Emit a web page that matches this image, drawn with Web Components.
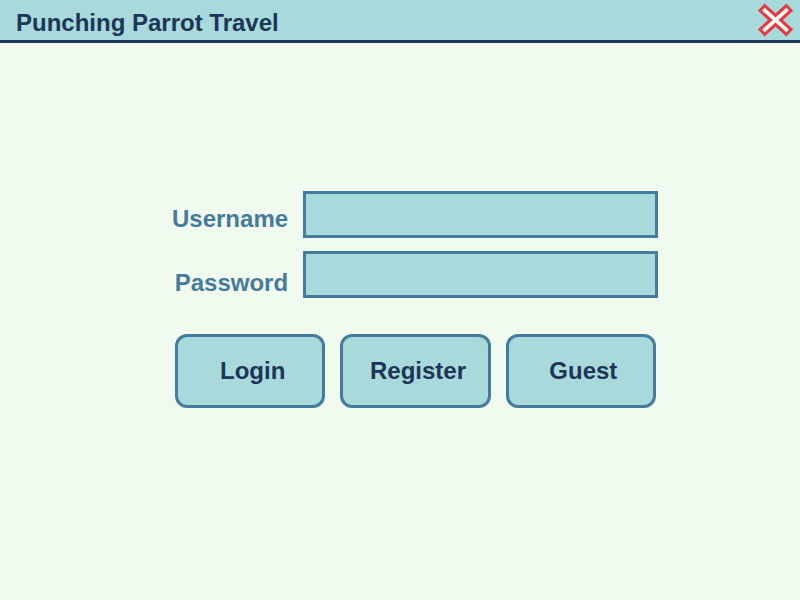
<!DOCTYPE html>
<html lang="en">
<head>
<meta charset="utf-8">
<title>Punching Parrot Travel</title>
<style>
  :root {
    --cream: #f1faee;
    --aqua: #a8dadc;
    --steel: #457b9d;
    --navy: #1d3557;
    --red: #e63946;
  }
  body {
    margin: 0;
    background: var(--cream);
    color: var(--navy);
    font: bold 24px/28px "Liberation Sans", Arial, sans-serif;
  }
</style>
</head>
<body>
<travel-app>
  <title-bar slot="header">Punching Parrot Travel</title-bar>
  <login-form>
    <action-button slot="actions">Login</action-button>
    <action-button slot="actions">Register</action-button>
    <action-button slot="actions">Guest</action-button>
  </login-form>
</travel-app>
<script>
  function define(name, html) {
    customElements.define(name, class extends HTMLElement {
      constructor() {
        super();
        this.attachShadow({ mode: "open" }).innerHTML = html;
      }
    });
  }

  define("travel-app", `
    <style>
      :host { display: flex; flex-direction: column; min-height: 100vh; }
      main {
        flex: 1;
        display: flex;
        align-items: center;
        justify-content: center;
        padding: 0 0 44px 30px;
      }
    </style>
    <slot name="header"></slot>
    <main><slot></slot></main>`);

  define("title-bar", `
    <style>
      :host { display: block; }
      header {
        display: flex;
        align-items: center;
        justify-content: space-between;
        padding: 2px 7px 2px 16px;
        background: var(--aqua);
        border-bottom: 3px solid var(--navy);
      }
      h1 { margin: 0; padding-top: 6px; font: inherit; }
      button { display: flex; padding: 2px 0; border: 0; background: none; cursor: pointer; }
    </style>
    <header>
      <h1><slot></slot></h1>
      <button type="button" aria-label="Close">
        <svg width="35" height="32" viewBox="0 0 35 32" fill="none" overflow="visible" aria-hidden="true">
          <path d="M3.2 3.1 31.8 28.9M31.8 3.1 3.2 28.9" stroke="var(--red)" stroke-width="10"/>
          <path d="M5.4 5.1 29.6 26.9M29.6 5.1 5.4 26.9" stroke="var(--cream)" stroke-width="3.8"/>
        </svg>
      </button>
    </header>`);

  define("login-form", `
    <style>
      :host { display: block; flex: 0 1 486px; min-width: 0; }
      form { display: flex; flex-direction: column; gap: 36px; }
      .fields { display: flex; gap: 15px; }
      .labels {
        flex: 1;
        display: flex;
        flex-direction: column;
        align-items: flex-end;
        gap: 36px;
        padding-top: 14px;
        color: var(--steel);
      }
      .inputs { flex: 0 1 355px; min-width: 0; display: flex; flex-direction: column; gap: 13px; }
      input {
        box-sizing: border-box;
        width: 100%;
        height: 47px;
        margin: 0;
        padding: 0 10px;
        border: 3px solid var(--steel);
        border-radius: 0;
        background: var(--aqua);
        color: var(--navy);
        font: inherit;
      }
      .actions { display: flex; gap: 15px; padding: 0 2px 0 3px; }
    </style>
    <form>
      <div class="fields">
        <div class="labels">
          <label for="username">Username</label>
          <label for="password">Password</label>
        </div>
        <div class="inputs">
          <input id="username" type="text" autocomplete="username">
          <input id="password" type="password" autocomplete="current-password">
        </div>
      </div>
      <div class="actions"><slot name="actions"></slot></div>
    </form>`);

  define("action-button", `
    <style>
      :host { display: block; flex: 1; min-width: 0; }
      button {
        box-sizing: border-box;
        width: 100%;
        height: 74px;
        padding: 0 0 0 5px;
        border: 3px solid var(--steel);
        border-radius: 12px;
        background: var(--aqua);
        color: var(--navy);
        font: inherit;
        cursor: pointer;
      }
    </style>
    <button type="button"><slot></slot></button>`);
</script>
</body>
</html>
